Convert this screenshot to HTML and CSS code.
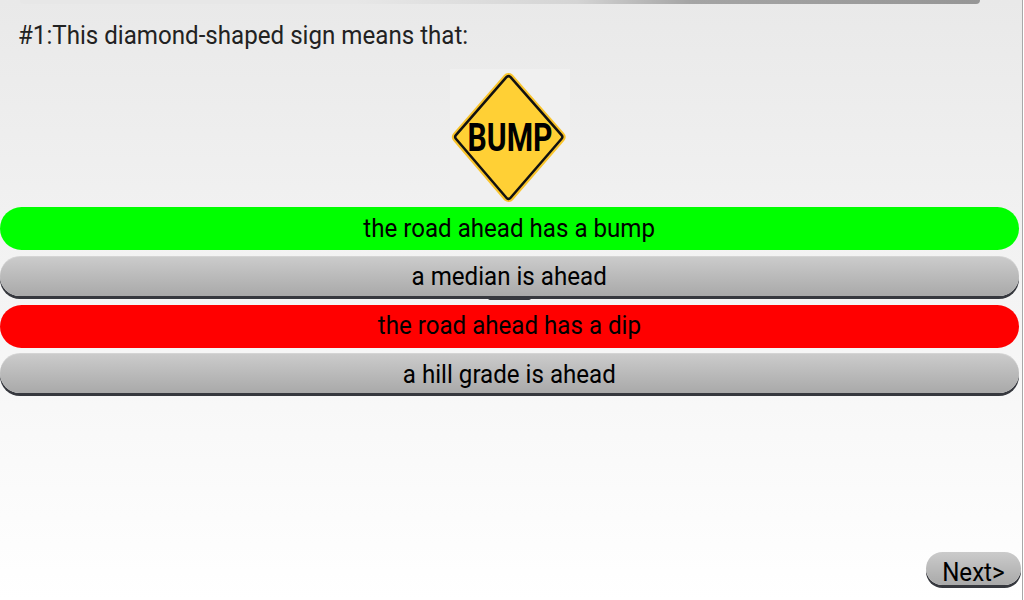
FILE: index.html
```html
<!DOCTYPE html>
<html lang="en">
<head>
    <meta charset="UTF-8">
    <title>Road Sign Quiz</title>
    <link rel="stylesheet" href="styles.css">
</head>
<body>
    <div class="page">
        <div class="top-bar"></div>
        <p class="question"><span class="squeeze">#1:This diamond-shaped sign means that:</span></p>

        <div class="sign-box">
            <svg class="sign" width="120" height="137" viewBox="0 0 120 137">
                <polygon class="sign-rim" points="58.5,10 109.5,68 58.5,127 8,68"/>
                <polygon class="sign-line" points="58.5,10 109.5,68 58.5,127 8,68"/>
                <polygon class="sign-face" points="58.5,10 109.5,68 58.5,127 8,68"/>
                <text class="sign-text" x="60" y="82" text-anchor="middle" textLength="85" lengthAdjust="spacingAndGlyphs">BUMP</text>
            </svg>
        </div>

        <div class="options">
            <div class="option correct"><span class="squeeze">the road ahead has a bump</span></div>
            <div class="option tabbed"><span class="squeeze">a median is ahead</span></div>
            <div class="option wrong"><span class="squeeze">the road ahead has a dip</span></div>
            <div class="option last"><span class="squeeze">a hill grade is ahead</span></div>
        </div>

        <div class="footer">
            <div class="next-btn"><span class="squeeze">Next&gt;</span></div>
        </div>
    </div>
</body>
</html>
```

FILE: styles.css
```css
html, body {
    margin: 0;
    height: 100%;
}
body {
    font-family: Roboto, "Liberation Sans", sans-serif;
    color: #000;
    overflow: hidden;
}
.page {
    box-sizing: border-box;
    width: 1023px;
    height: 600px;
    display: flex;
    flex-direction: column;
    background: linear-gradient(#e9e9e9, #f2f2f2 40%, #ffffff);
    border-right: 1px solid #a8a8a8;
}
.squeeze {
    display: inline-block;
    transform: scaleX(0.965);
}
.top-bar {
    height: 4px;
    margin: 0 42px 0 20px;
    flex-shrink: 0;
    background: linear-gradient(90deg, #e7e7e7 35%, #d4d4d4 58%, #a4a4a4 70%, #969696 100%);
    border-radius: 0 0 4px 4px;
}
.question {
    margin: 17px 0 0 18px;
    font-size: 25px;
    line-height: 30px;
    color: #222;
}
.question .squeeze {
    transform-origin: left;
}
.sign-box {
    align-self: center;
    margin: 18px 0 0 -2px;
    width: 120px;
    height: 137px;
    background: #f0f0f0;
}
.sign {
    display: block;
    overflow: visible;
}
.sign polygon {
    stroke-linejoin: round;
}
.sign-rim {
    fill: #f9c42c;
    stroke: #f9c42c;
    stroke-width: 12;
}
.sign-line {
    fill: #111;
    stroke: #111;
    stroke-width: 8;
}
.sign-face {
    fill: #ffd035;
    stroke: #ffd035;
    stroke-width: 3;
}
.sign-text {
    font-family: Roboto, sans-serif;
    font-size: 39px;
    font-weight: 700;
    fill: #000;
}
.options {
    display: flex;
    flex-direction: column;
    gap: 6px;
    margin-top: 1px;
    width: 1019px;
}
.option {
    position: relative;
    box-sizing: border-box;
    height: 40px;
    line-height: 40px;
    margin-bottom: 3px;
    text-align: center;
    font-size: 25px;
    border-radius: 22px;
    background: linear-gradient(#cbcbcb, #a9a9a9);
    border-top: 1px solid #d4d4d4;
    box-shadow: 0 3px 0 #36383e;
}
.option.correct,
.option.wrong {
    height: 43px;
    margin-bottom: 0;
    border-top: none;
    box-shadow: none;
}
.option.correct {
    line-height: 43px;
    background: #00ff00;
}
.option.wrong {
    line-height: 41px;
    background: #ff0000;
}
.option.last {
    margin-top: -1px;
    line-height: 42px;
}
.option.tabbed::after {
    content: "";
    position: absolute;
    left: 488px;
    bottom: -4px;
    width: 43px;
    height: 2px;
    background: #36383e;
    border-radius: 0 0 3px 3px;
}
.footer {
    margin-top: auto;
    display: flex;
    justify-content: flex-end;
    padding: 0 1px 15px 0;
}
.next-btn {
    box-sizing: border-box;
    width: 95px;
    height: 33px;
    line-height: 41px;
    text-align: center;
    font-size: 25px;
    border-radius: 17px;
    background: linear-gradient(#cbcbcb, #a9a9a9);
    box-shadow: 0 3px 0 #36383e;
}
```
